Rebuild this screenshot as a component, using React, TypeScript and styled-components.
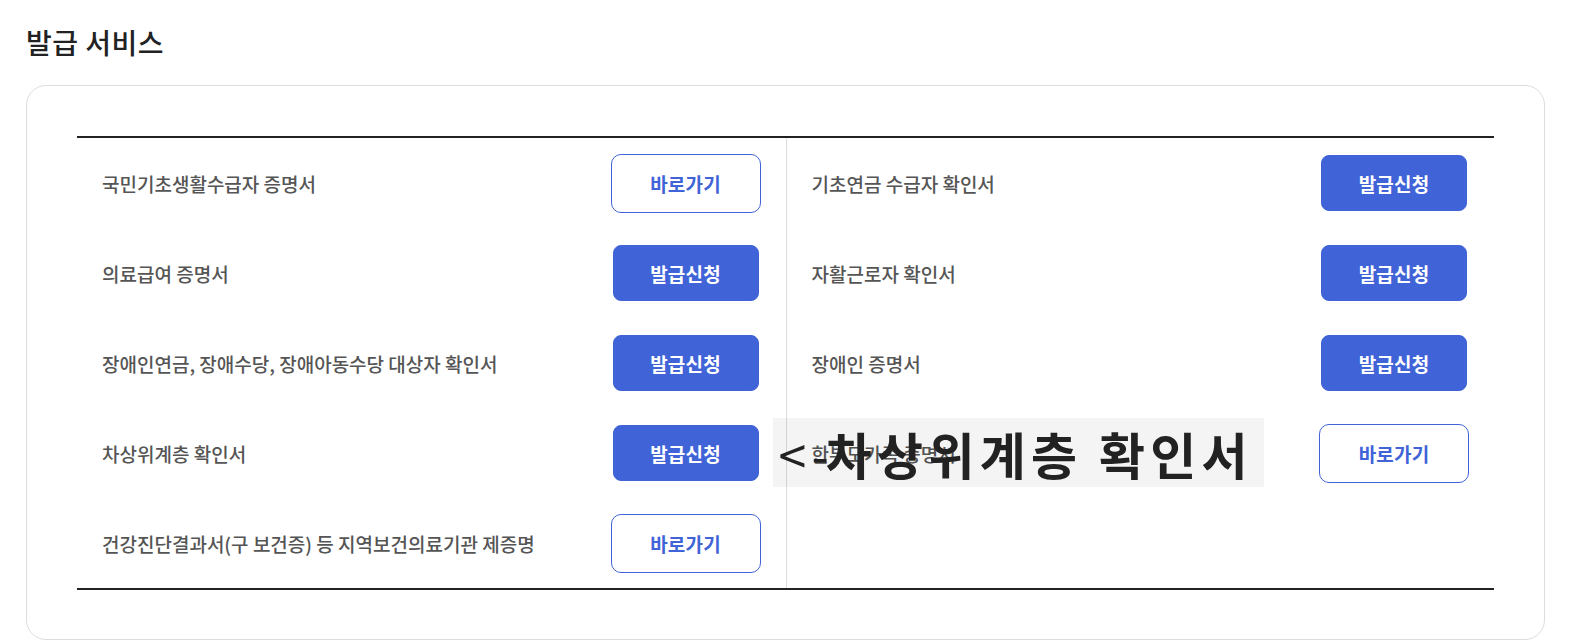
import styled, { createGlobalStyle } from 'styled-components';

const GlobalStyle = createGlobalStyle`
  body {
    margin: 0;
    background: #fff;
    font-family: "Noto Sans CJK KR", "Noto Sans", sans-serif;
    color: #222;
  }
`;

const Page = styled.main`
  width: 1519px;
  padding: 20px 0 4px 26px;
`;

const Title = styled.h2`
  margin: 0 0 21px;
  font-size: 28px;
  line-height: 44px;
  font-weight: 500;
  letter-spacing: 0.5px;
  color: #222;
`;

const Card = styled.section`
  border: 1px solid #ddd;
  border-radius: 20px;
  padding: 50px 50px 49px;
`;

const Table = styled.div`
  display: grid;
  grid-template-columns: 1fr 1fr;
  border-top: 2px solid #222;
  border-bottom: 2px solid #222;
`;

const Column = styled.ul<{ $divided?: boolean }>`
  list-style: none;
  margin: 0;
  padding: 0;
  border-left: ${(p) => (p.$divided ? '1px solid #ddd' : 'none')};
`;

const Row = styled.li`
  position: relative;
  height: 90px;
  display: flex;
  align-items: center;
  justify-content: space-between;
  padding: 0 25px;
`;

const Label = styled.span`
  font-size: 19px;
  font-weight: 500;
  color: #555;
  letter-spacing: 0;
`;

const Slot = styled.div`
  width: 150px;
  display: flex;
  justify-content: center;
`;

const ActionButton = styled.a<{ $solid?: boolean }>`
  box-sizing: border-box;
  display: flex;
  align-items: center;
  justify-content: center;
  width: ${(p) => (p.$solid ? '146px' : '150px')};
  height: ${(p) => (p.$solid ? '56px' : '59px')};
  border: 1px solid #4063d8;
  border-radius: ${(p) => (p.$solid ? '8px' : '10px')};
  background: ${(p) => (p.$solid ? '#4063d8' : '#fff')};
  color: ${(p) => (p.$solid ? '#fff' : '#4063d8')};
  font-size: 19px;
  font-weight: 700;
  letter-spacing: 0.2px;
  text-decoration: none;
  cursor: pointer;
`;

const Hover = styled.div`
  position: absolute;
  left: -14px;
  top: 10px;
  width: 491px;
  height: 69px;
  display: flex;
  align-items: center;
  padding-left: 6px;
  box-sizing: border-box;
  background: rgba(0, 0, 0, 0.045);
  color: #222;
  font-size: 50px;
  font-weight: 700;
  letter-spacing: 5.3px;
  white-space: nowrap;
  pointer-events: none;
`;

const Back = styled.span`
  font-weight: 400;
  letter-spacing: -3px;
  margin-right: 0;
`;

type Item = { name: string; solid?: boolean };

const left: Item[] = [
  { name: '국민기초생활수급자 증명서' },
  { name: '의료급여 증명서', solid: true },
  { name: '장애인연금, 장애수당, 장애아동수당 대상자 확인서', solid: true },
  { name: '차상위계층 확인서', solid: true },
  { name: '건강진단결과서(구 보건증) 등 지역보건의료기관 제증명' },
];

const right: Item[] = [
  { name: '기초연금 수급자 확인서', solid: true },
  { name: '자활근로자 확인서', solid: true },
  { name: '장애인 증명서', solid: true },
  { name: '한부모가족 증명서' },
];

function ServiceRow({ item, hover }: { item: Item; hover?: string }) {
  return (
    <Row>
      <Label>{item.name}</Label>
      <Slot>
        <ActionButton $solid={item.solid}>{item.solid ? '발급신청' : '바로가기'}</ActionButton>
      </Slot>
      {hover && (
        <Hover>
          <Back>&lt; -</Back>
          {hover}
        </Hover>
      )}
    </Row>
  );
}

export default function App() {
  return (
    <>
      <GlobalStyle />
      <Page>
        <Title>발급 서비스</Title>
        <Card>
          <Table>
            <Column>
              {left.map((item) => (
                <ServiceRow key={item.name} item={item} />
              ))}
            </Column>
            <Column $divided>
              {right.map((item, i) => (
                <ServiceRow key={item.name} item={item} hover={i === 3 ? '차상위계층 확인서' : undefined} />
              ))}
            </Column>
          </Table>
        </Card>
      </Page>
    </>
  );
}
